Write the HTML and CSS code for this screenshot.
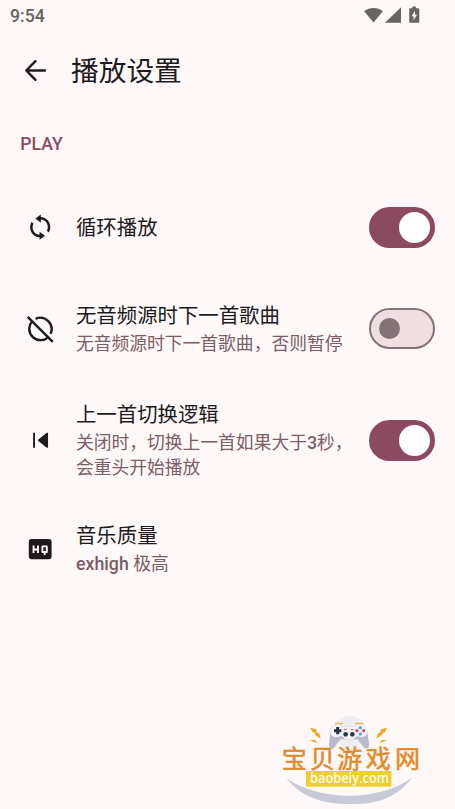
FILE: index.html
```html
<!DOCTYPE html>
<html lang="zh-CN">
<head>
<meta charset="utf-8">
<meta name="viewport" content="width=device-width, initial-scale=1">
<title>播放设置</title>
<link rel="stylesheet" href="styles.css">
</head>
<body>
<div class="status">
  <span class="clock">9:54</span>
  <svg class="status-icons" width="58" height="20" viewBox="0 0 58 20">
    <path d="M.2 5.200C5.500.9 13.500.9 18.800 5.200L9.500 16.500z"/>
    <path d="M21 16.800H37V1.300z"/>
    <path fill-rule="evenodd" d="M48.300 .5h3.600v1.800H54.300a1 1 0 0 1 1 1V15.800a1 1 0 0 1-1 1H46.200a1 1 0 0 1-1-1V3.300a1 1 0 0 1 1-1h2.100zM51 4.800L47.600 10.300h2v3.900l3.400-5.400h-2z"/>
  </svg>
</div>
<header class="appbar">
  <svg class="back" viewBox="0 0 24 24"><path d="M19.300 12H5M12 4.800L4.800 12l7.200 7.200" fill="none" stroke="currentColor" stroke-width="1.900" stroke-linecap="round" stroke-linejoin="round"/></svg>
  <h1>播放设置</h1>
</header>
<main>
  <h2 class="section">PLAY</h2>
  <div class="row">
    <svg class="icon" viewBox="0 0 24 24"><path d="M12.500 4V2L8.200 5.200l4.300 3.300V6c3.200.2 5.500 2.800 5.500 6 0 1.010-.25 1.970-.7 2.800l1.460 1.460A7.930 7.930 0 0 0 20 12c0-4.300-3.300-7.800-7.500-8zm-1 14C8.300 17.800 6 15.200 6 12c0-1.010.25-1.970.7-2.800L5.240 7.740A7.930 7.930 0 0 0 4 12c0 4.300 3.300 7.800 7.500 8v2l4.300-3.200-4.300-3.300z"/></svg>
    <div class="text"><div class="title">循环播放</div></div>
    <div class="switch on"><span class="thumb"></span></div>
  </div>
  <div class="row">
    <svg class="icon" viewBox="0 0 24 24"><g fill="none" stroke="currentColor" stroke-width="1.900"><path d="M8.300 3.800A9 9 0 0 1 20.200 15.700M18.300 18.400A9 9 0 0 1 5.600 5.700M2.100 2.200L21.900 22"/></g></svg>
    <div class="text high"><div class="title">无音频源时下一首歌曲</div><div class="sub spaced">无音频源时下一首歌曲，否则暂停</div></div>
    <div class="switch"><span class="thumb"></span></div>
  </div>
  <div class="row tall">
    <svg class="icon" viewBox="0 0 24 24"><path d="M6.400 6.200h1.500v11.700H6.400zM18.200 6.800v10.500a.7.7 0 0 1-1.200.5l-6.500-5.200a.7.7 0 0 1 0-1.100L17 6.300a.7.7 0 0 1 1.200.5z"/></svg>
    <div class="text"><div class="title">上一首切换逻辑</div><div class="sub spaced">关闭时，切换上一首如果大于<span class="latin">3</span>秒，<br>会重头开始播放</div></div>
    <div class="switch on"><span class="thumb"></span></div>
  </div>
  <div class="row last">
    <svg class="icon" viewBox="0 0 24 24"><path fill-rule="evenodd" d="M19 4H5c-1.110 0-2 .9-2 2v12c0 1.100.89 2 2 2h14c1.100 0 2-.9 2-2V6c0-1.100-.9-2-2-2zm-8 11H9.500v-2h-2v2H6V9h1.500v2.500h2V9H11zm7-1c0 .55-.45 1-1 1h-.75v1.500h-1.500V15H14c-.55 0-1-.45-1-1v-4c0-.55.45-1 1-1h3c.55 0 1 .45 1 1zm-3.500-.5h2v-3h-2z"/></svg>
    <div class="text high"><div class="title">音乐质量</div><div class="sub spaced"><span class="latin">exhigh</span> 极高</div></div>
  </div>
</main>
<svg class="watermark" width="160" height="104" viewBox="0 0 480 312">
  <circle cx="240" cy="80" r="48" fill="#eeeeee"/>
  <path d="M48 219C150 290 325 290 426 218C370 292 298 297 238 297C170 297 100 284 48 219z" fill="#c9cad8"/>
  <path d="M197 59v-4h18v4M258 59v-4h19v4" fill="none" stroke="#e5b94d" stroke-width="4"/>
  <path d="M204 58C190 59 181 66 181 80L177 116C176 136 190 136 198 121L211 103H263L277 122C286 136 299 133 297 115L292 80C291 66 282 59 268 58L254 65H218z" fill="#b9bbcb"/>
  <path d="M204 58C190 59 181 67 181 80C181 91 190 97 202 96L213 92L225 102H249L262 93C279 101 292 93 292 79C291 66 282 59 268 58L254 65H218z" fill="#f3f3f8"/>
  <path d="M203 66v22M192 77h22" stroke="#263445" stroke-width="9"/>
  <circle cx="227" cy="88" r="7" fill="#263b50"/><circle cx="247" cy="88" r="7" fill="#263b50"/>
  <path d="M222 74h8M242 74h8" stroke="#d94d56" stroke-width="3"/>
  <circle cx="271" cy="68" r="5" fill="#50acd0"/><circle cx="281" cy="77" r="5" fill="#d9505b"/><circle cx="271" cy="87" r="5" fill="#50acd0"/><circle cx="261" cy="77" r="5" fill="#d9505b"/>
  <g fill="#eda52b"><path d="M121 68l18 5 1 10 8 2 4 16-16-11-2-7-7-2z"/><path d="M351 68l-18 5-3 10-6 2-5 16 17-11 3-7 6-2z"/><path d="M120 106l14-2 9 10-12-4z"/><path d="M351 106l-14-2-9 10 12-4z"/></g>
  <text class="wm-name" x="35 120 202 287 375" y="188">宝贝游戏网</text>
  <rect x="108" y="198" width="256" height="47" fill="#ebd02f"/>
  <text class="wm-url" x="120" y="235" textLength="237" lengthAdjust="spacingAndGlyphs">baobeiy.com</text>
</svg>
</body>
</html>
```
FILE: styles.css
```css
* { box-sizing: border-box; }
body {
  margin: 0;
  height: 809px;
  position: relative;
  overflow: hidden;
  background: #fff8f8;
  color: #201a1c;
  font-family: Roboto, "Noto Sans CJK SC", sans-serif;
}
h1, h2 { margin: 0; font-weight: 400; }
svg { display: block; fill: currentColor; }
.status {
  height: 31px;
  padding: 0 33px 0 10px;
  display: flex;
  align-items: center;
  justify-content: space-between;
  color: #686464;
}
.clock { font-size: 17.7px; line-height: 31px; font-weight: 500; margin-top: 2px; }
.appbar {
  height: 80px;
  padding-left: 20px;
  display: flex;
  align-items: center;
}
.back { width: 31px; height: 31px; margin-top: -1px; }
.appbar h1 { margin: 2px 0 0 20px; font-size: 27.7px; line-height: 36px; }
.section {
  height: 65px;
  padding: 20px 20.3px 0;
  font-size: 17.7px;
  line-height: 26px;
  font-weight: 500;
  color: #8c4a60;
}
.row {
  height: 102px;
  padding: 0 20px 0 25px;
  display: flex;
  align-items: center;
}
.row.tall { height: 120px; }
.row.last { height: 98px; }
.icon { width: 30.4px; height: 30.4px; flex: none; }
.text { flex: 1; margin: 1.5px 0 0 20.6px; white-space: nowrap; }
.text.high { margin-top: 0; }
.title { font-size: 20.4px; line-height: 30px; }
.sub { font-size: 17.78px; line-height: 25.4px; color: #7c5c65; }
.sub.spaced { padding-top: 1px; }
.latin { font-weight: 500; }
.switch {
  width: 66px;
  height: 41px;
  flex: none;
  border: 2.5px solid #837377;
  border-radius: 21px;
  background: #f0dfe2;
  display: flex;
  align-items: center;
  margin-top: -1px;
  padding: 0 8px;
}
.thumb { width: 21px; height: 21px; border-radius: 50%; background: #837377; }
.switch.on { background: #8c4a60; border-color: #8c4a60; justify-content: flex-end; padding: 0 3px; margin-top: 0; }
.switch.on .thumb { width: 31px; height: 31px; background: #fff; }
.watermark { position: absolute; left: 270px; top: 705px; }
.wm-name { font: 400 75px "Noto Sans CJK SC", sans-serif; fill: #e18a27; stroke: #e18a27; stroke-width: 1.5; }
.wm-url { font: 600 41px "Open Sans", sans-serif; fill: #fffbe6; }
```
